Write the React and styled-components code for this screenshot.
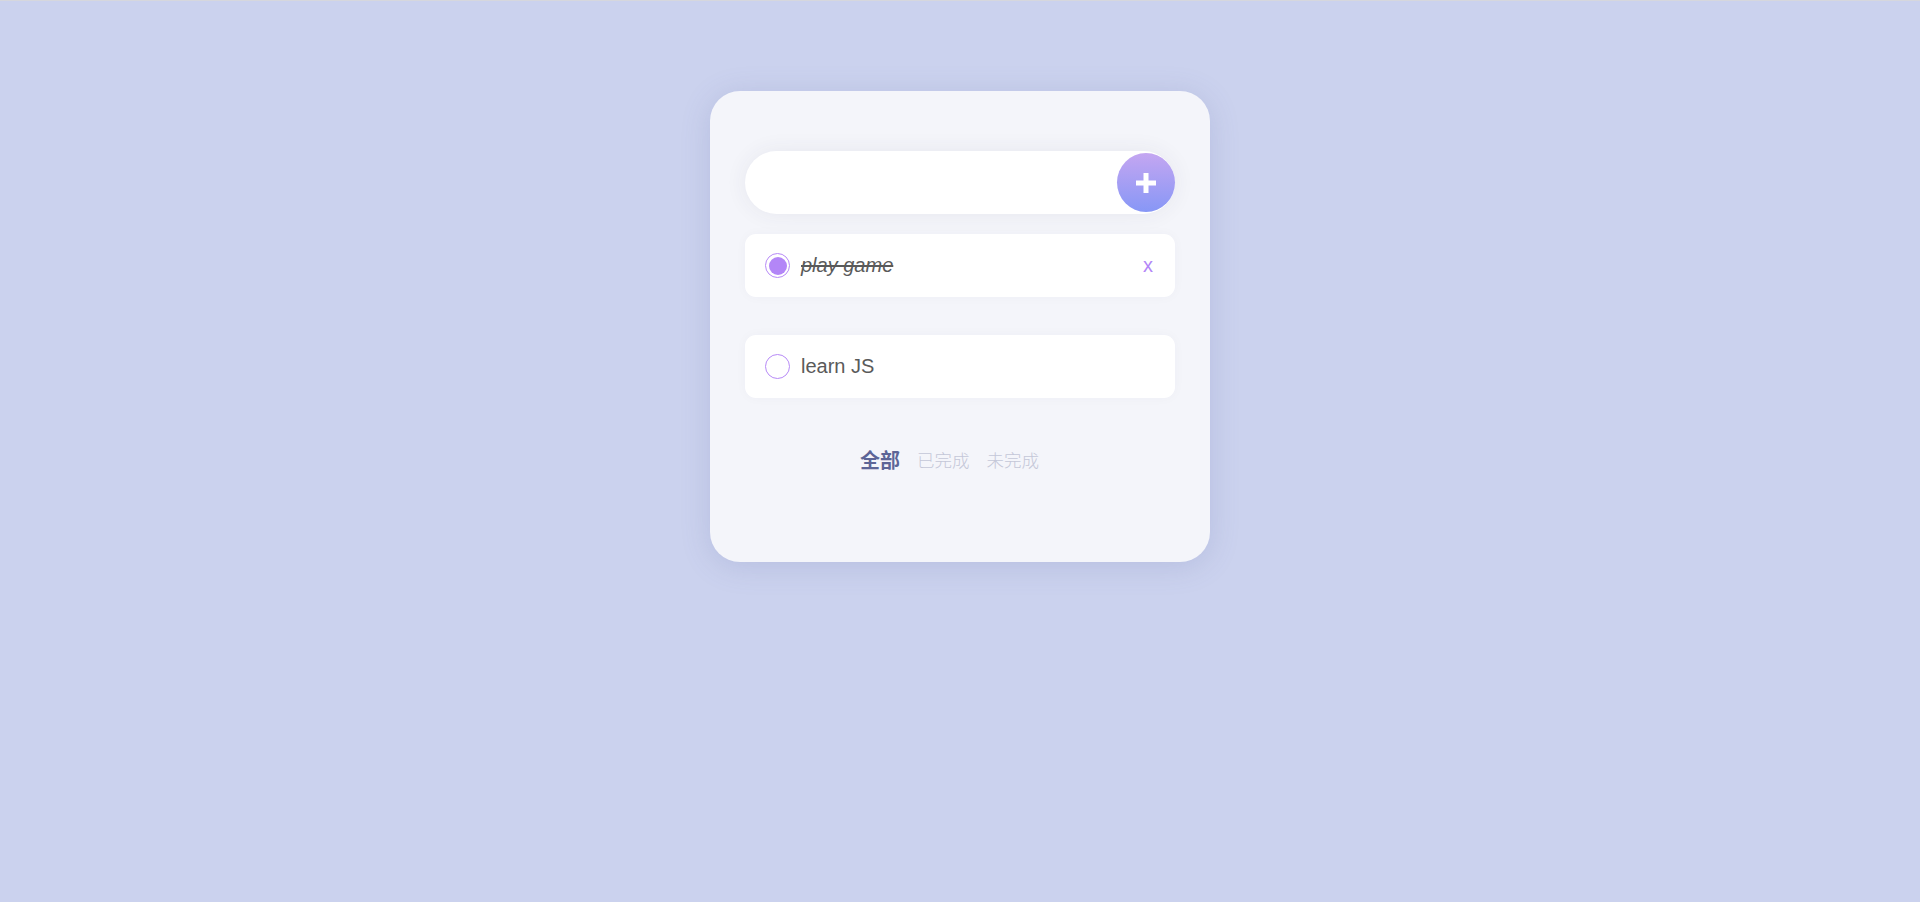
import styled, { createGlobalStyle } from "styled-components";

const GlobalStyle = createGlobalStyle`
  body {
    margin: 0;
    background: #cbd2ee;
    font-family: "Liberation Sans", Arial, "Noto Sans CJK SC", sans-serif;
  }
`;

const todos = [
  { id: 1, text: "play game", done: true },
  { id: 2, text: "learn JS", done: false },
];

const filters = ["全部", "已完成", "未完成"];

const App = () => {
  return (
    <Page>
      <GlobalStyle />
      <Card>
        <InputBox>
          <Input type="text" />
          <AddButton>
            <svg width="22" height="22" viewBox="0 0 22 22">
              <rect x="8.5" y="1" width="5" height="20" fill="#fff" />
              <rect x="1" y="8.5" width="20" height="5" fill="#fff" />
            </svg>
          </AddButton>
        </InputBox>

        <List>
          {todos.map((todo) => (
            <Item key={todo.id}>
              <Check done={todo.done} />
              <ItemText done={todo.done}>{todo.text}</ItemText>
              {todo.done && <Remove>x</Remove>}
            </Item>
          ))}
        </List>

        <Filters>
          {filters.map((f, i) => (
            <FilterItem key={f} active={i === 0}>
              {f}
            </FilterItem>
          ))}
        </Filters>
      </Card>
    </Page>
  );
};

export default App;

const Page = styled.div`
  min-height: 100vh;
  border-top: 1px solid #d6d7dd;
  box-sizing: border-box;
  padding-top: 90px;
`;

const Card = styled.div`
  width: 500px;
  height: 471px;
  box-sizing: border-box;
  margin: 0 auto;
  padding: 60px 35px 0;
  background: #f4f5fa;
  border-radius: 30px;
  box-shadow: 0 4px 30px rgba(90, 100, 160, 0.18);
`;

const InputBox = styled.div`
  position: relative;
  height: 63px;
  background: #fff;
  border-radius: 32px;
  box-shadow: 0 0 22px rgba(60, 60, 90, 0.07);
`;

const Input = styled.input`
  width: 100%;
  height: 100%;
  box-sizing: border-box;
  border: none;
  outline: none;
  background: transparent;
  padding: 0 80px 0 28px;
  font-size: 20px;
  font-family: inherit;
  color: #555;
`;

const AddButton = styled.button`
  position: absolute;
  right: 0;
  top: 2px;
  width: 58px;
  height: 59px;
  border: none;
  padding: 0;
  border-radius: 50%;
  background: linear-gradient(180deg, #c4a6f1 0%, #8797f6 100%);
  display: flex;
  align-items: center;
  justify-content: center;
  cursor: pointer;
`;

const List = styled.div`
  display: flex;
  flex-direction: column;
  gap: 38px;
  margin-top: 20px;
`;

const Item = styled.div`
  height: 63px;
  background: #fff;
  border-radius: 11px;
  display: flex;
  align-items: center;
  padding: 0 22px 0 20px;
  box-shadow: 0 0 12px rgba(60, 60, 90, 0.03);
`;

const Check = styled.span`
  width: 25px;
  height: 25px;
  box-sizing: border-box;
  border: 1px solid #b78af7;
  border-radius: 50%;
  flex-shrink: 0;
  display: flex;
  align-items: center;
  justify-content: center;

  &::after {
    content: "";
    width: 18px;
    height: 18px;
    border-radius: 50%;
    background: ${(props) => (props.done ? "#b386f7" : "transparent")};
  }
`;

const ItemText = styled.span`
  flex: 1;
  margin-left: 11px;
  font-size: 20px;
  color: #5a5a5a;
  font-style: ${(props) => (props.done ? "italic" : "normal")};
  text-decoration: ${(props) => (props.done ? "line-through" : "none")};
`;

const Remove = styled.span`
  font-size: 20px;
  color: #b386f7;
  cursor: pointer;
`;

const Filters = styled.div`
  display: flex;
  justify-content: center;
  align-items: center;
  margin-top: 46px;
  padding-right: 4px;
  height: 30px;
`;

const FilterItem = styled.span`
  margin-right: 17px;
  font-family: "Noto Sans CJK SC", sans-serif;
  font-size: ${(props) => (props.active ? "20px" : "17.5px")};
  font-weight: ${(props) => (props.active ? 700 : 300)};
  color: ${(props) => (props.active ? "#5d6597" : "#c4c7d8")};
  cursor: pointer;
`;
